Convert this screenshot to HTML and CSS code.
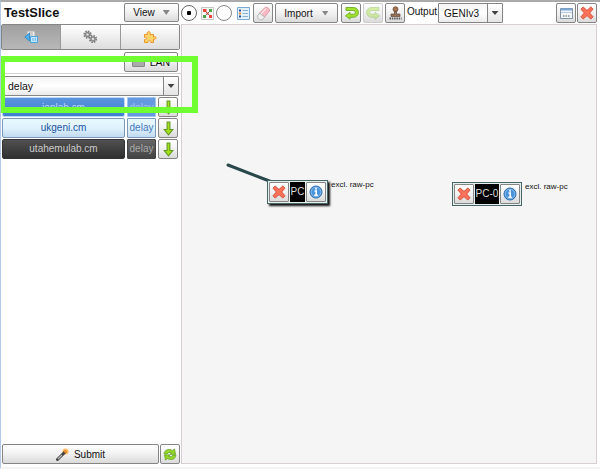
FILE: index.html
```
<!DOCTYPE html>
<html lang="en">
<head>
<meta charset="utf-8">
<title>TestSlice</title>
<link rel="stylesheet" href="styles.css">
</head>
<body>
<svg class="defs" width="0" height="0">
  <defs>
    <symbol id="cross" viewBox="0 0 14 14"><path d="M3.2 1 7 4.5 10.8 1 13 3.2 9.6 7 13 10.8 10.8 13 7 9.6 3.2 13 1 10.8 4.4 7 1 3.2Z" fill="#fa7257" stroke="#d94b38" stroke-linejoin="round"/></symbol>
    <symbol id="info" viewBox="0 0 14 14"><circle cx="7" cy="7" r="6" fill="#4b94da" stroke="#2466ae"/><circle cx="7" cy="7" r="4.9" fill="none" stroke="#9ccaf2" stroke-width=".7"/><path d="M7 2.8v2M5.5 6H7.2V10M5.3 10.3H8.8" stroke="#fff" stroke-width="1.6" fill="none"/></symbol>
    <symbol id="down" viewBox="0 0 10 14"><path d="M3.7 1h2.6v7H9L5 13 1 8h2.7Z" fill="#a5df18" stroke="#5f9a22"/></symbol>
    <symbol id="turn" viewBox="0 0 15 14"><path d="M2 1.500H9.500a4.900 4.900 0 0 1 0 9.800H6V13.300L1.500 9.800 6 6.300V8.300H9.500a1.900 1.900 0 0 0 0-3.800H2Z" fill="#a2e22b" stroke="#68ab22" stroke-width=".9" stroke-linejoin="round"/></symbol>
    <symbol id="gear" viewBox="0 0 10 10"><circle cx="5" cy="5" r="3.7" fill="none" stroke="#777" stroke-width="1.8" stroke-dasharray="1.7 1.2"/><circle cx="5" cy="5" r="2.3" fill="#ddd" stroke="#858585" stroke-width="1.7"/></symbol>
  </defs>
</svg>
<div class="app">
  <aside class="side">
    <header class="head"><h1>TestSlice</h1><button class="btn view">View<i class="tri"></i></button></header>
    <nav class="tabs">
      <span class="tab on"><svg width="15" height="14" viewBox="0 0 15 14"><path d="M3 1h8v9H3z" fill="#eee" stroke="#aaa"/><path d="M5 3h4M5 5h4" stroke="#aaa"/><path d="M5.500 3v8L.8 7Z" fill="#55afe8" stroke="#398fca"/><path d="M6.500 6.500h7v6h-7z" fill="#c5e7fc" stroke="#4aa4e0"/><path d="M9 8v3M11.300 8v3" stroke="#65b4e8"/></svg></span>
      <span class="tab"><svg width="15" height="14"><use href="#gear" width="9" height="9"/><use href="#gear" x="5.5" y="4.5" width="9" height="9"/></svg></span>
      <span class="tab"><svg width="14" height="14" viewBox="0 0 14 14"><path d="M1.500 4.500H4.500C3 .5 8.500 .5 7 4.500H10.500V7C14 5.500 14 10 10.500 9V12.500H7.800C8.300 9.800 4.500 9.800 5 12.500H1.500V9.500C4.500 10 4.500 6.800 1.500 7.500Z" fill="#ffd46b" stroke="#ec9629"/></svg></span>
    </nav>
    <div class="lanbar"><button class="btn lan"><i class="lanicon"></i>LAN</button></div>
    <div class="combo delay"><span>delay</span><b><i class="caret"></i></b></div>
    <div class="row blue"><span class="name">ionlab.cm</span><span class="kind">delay</span><button class="btn"><svg width="11" height="15"><use href="#down"/></svg></button></div>
    <div class="row pale"><span class="name">ukgeni.cm</span><span class="kind">delay</span><button class="btn"><svg width="11" height="15"><use href="#down"/></svg></button></div>
    <div class="row dark"><span class="name">utahemulab.cm</span><span class="kind">delay</span><button class="btn"><svg width="11" height="15"><use href="#down"/></svg></button></div>
    <footer class="foot">
      <button class="btn submit"><svg width="13" height="13" viewBox="0 0 13 13"><circle cx="9.500" cy="3.500" r="3" fill="#ffbd5d"/><path d="M1.500 11.500 9 4" stroke="#444" stroke-width="3" stroke-linecap="round"/><path d="M2 11 6 7" stroke="#bbb" stroke-width="1.300"/><path d="M8.500 4.500 10 3" stroke="#f58a28" stroke-width="2.500"/></svg>Submit</button>
      <button class="btn refresh"><svg width="14" height="13" viewBox="0 0 14 13"><path d="M1 6C1.500 1.500 6 .5 9.500 2.500L11.500 1 12.500 6.300H7L8.500 4.700C6.500 4 5 4.500 4 6ZM13 7C12.500 11.500 8 12.500 4.500 10.500L2.500 12 1.500 6.900H7L5.500 8.400C8 9 9 8.500 10 7Z" fill="#98d82c" stroke="#5f9f20" stroke-width=".8"/></svg></button>
    </footer>
  </aside>
  <main class="main">
    <div class="bar">
      <i class="radio on"></i>
      <svg class="links" width="13" height="13" viewBox="0 0 13 13"><path d="M.5.5h12v12H.5z" fill="#f6f6f6" stroke="#c4c4c4"/><path d="M3.500 9.500 9.500 3.500M3.500 3.500 9.500 9.500" stroke="#777"/><path d="M2 2h3.500v3H2zM8 8h3v3H8zM5.500 5.500h2v2h-2z" fill="#e8443c"/><path d="M8 2h3v3H8zM2 8h3v3H2z" fill="#4ea548"/></svg>
      <i class="radio second"></i>
      <svg class="list" width="13" height="13" viewBox="0 0 13 13"><path d="M.5.5h12v12H.5z" fill="#e3f1fc" stroke="#77a9d4"/><path d="M2 3.500h2M2 9.500h2" stroke="#284f9b" stroke-width="2"/><path d="M2 6.500h2" stroke="#e28735" stroke-width="2"/><path d="M5.500 3.500H11M5.500 6.500H11M5.500 9.500H11" stroke="#8ab1d1"/></svg>
      <button class="btn sq erase"><svg width="15" height="15" viewBox="0 0 15 15"><path d="M9 1.500c2-1 5 1 4.500 3.500l-4.800 6-5-4Z" fill="#fbb8c4" stroke="#dca0aa"/><path d="m3.700 7 5 4-2 2.500c-3 1-6-1-4.900-4Z" fill="#eee" stroke="#b5b5b5"/><path d="m5 8 5-5.500" stroke="#fff"/></svg></button>
      <button class="btn import">Import<i class="tri"></i></button>
      <button class="btn sq undo"><svg width="15" height="14"><use href="#turn"/></svg></button>
      <button class="btn sq redo"><svg width="15" height="14"><use href="#turn"/></svg></button>
      <button class="btn sq stamp"><svg width="15" height="15" viewBox="0 0 15 15"><circle cx="7.500" cy="3.200" r="2.500" fill="#a47452" stroke="#70503a" stroke-width=".8"/><path d="M6.500 5.500h2V8H12v2.500H3V8h3.500Z" fill="#967158" stroke="#60493b" stroke-width=".7"/><path d="M1.500 12.500h12" stroke="#555" stroke-width="2" stroke-dasharray="1.500 .8"/></svg></button>
      <span class="label">Output</span>
      <div class="combo format"><span>GENIv3</span><b><i class="caret"></i></b></div>
      <button class="btn sq win"><svg width="13" height="13" viewBox="0 0 13 13"><path d="M.5 1.500h12v10H.5z" fill="#f3f6f9" stroke="#8293a4"/><path d="M1 2.500h11" stroke="#79a8dd" stroke-width="2"/><path d="M1 5.500h11" stroke="#bccbdc"/><path d="M3 9h7" stroke="#555" stroke-dasharray="1.500 1"/></svg></button>
      <button class="btn sq close"><svg width="14" height="14"><use href="#cross"/></svg></button>
    </div>
    <div class="canvas">
      <svg class="wire" width="50" height="24"><path d="M3 2 47 19" stroke="#29484b" stroke-width="3" stroke-linecap="round"/></svg>
      <div class="node first"><button class="btn"><svg width="14" height="14"><use href="#cross"/></svg></button><span>PC</span><button class="btn"><svg width="14" height="14"><use href="#info"/></svg></button></div>
      <div class="note n1">excl. raw-pc</div>
      <div class="node other"><button class="btn"><svg width="14" height="14"><use href="#cross"/></svg></button><span>PC-0</span><button class="btn"><svg width="14" height="14"><use href="#info"/></svg></button></div>
      <div class="note n2">excl. raw-pc</div>
    </div>
  </main>
  <div class="highlight"></div>
</div>
</body>
</html>
```
FILE: styles.css
```
* { box-sizing: border-box; }
body { margin: 0; font: 10px "Liberation Sans", Arial, sans-serif; color: #111; }
h1 { margin: 0; font-size: 12.8px; line-height: 22px; }
svg { display: block; flex: none; }
i { flex: none; }
.defs { position: absolute; }
.app { position: relative; display: flex; width: 600px; height: 469px; overflow: hidden; background: #fff; border-top: 2px solid #aaa; border-left: 1px solid #b3c8e4; border-bottom: 2px solid #f4f2f3; }
.side { width: 180px; display: flex; flex-direction: column; }
.head { display: flex; justify-content: space-between; height: 22px; padding: 0 2px 0 3px; }
.btn { display: flex; align-items: center; justify-content: center; padding: 0; border: 1px solid #858585; border-radius: 2px; background: linear-gradient(#fff, #f1f1f1 50%, #dadada); font: 10px "Liberation Sans", Arial, sans-serif; color: #111; }
.view { width: 55px; height: 19px; margin-top: 1px; gap: 8px; }
.tri { width: 7px; height: 5px; background: #858585; clip-path: polygon(0 0, 100% 0, 50% 100%); }
.tabs { display: flex; width: 179px; height: 26px; border: 1px solid #858585; border-radius: 2px; }
.tab { flex: 1; display: flex; align-items: center; justify-content: center; background: linear-gradient(#fff, #eee 50%, #ddd); border-left: 1px solid #999; }
.tab.on { background: linear-gradient(#a0a0a0, #b8b8b8); border-left: 0; }
.lanbar { display: flex; justify-content: flex-end; height: 24px; padding: 2px 3px 0 0; border-bottom: 1px solid #d5d0d3; }
.lan { width: 54px; height: 20px; gap: 5px; font-size: 10.5px; }
.lanicon { width: 13px; height: 9px; background: #aaa; border: 1px solid #888; border-radius: 1px; }
.combo { display: flex; height: 20px; border: 1px solid #858585; border-radius: 1px; background: linear-gradient(#f5f5f5, #fff 50%, #eaeaea); line-height: 19px; }
.combo span { flex: 1; padding-left: 5px; }
.combo b { display: flex; width: 15px; align-items: center; justify-content: center; border-left: 1px solid #858585; background: linear-gradient(#fff, #e4e4e4); }
.caret { width: 7px; height: 4px; background: #444; clip-path: polygon(0 0, 100% 0, 50% 100%); }
.delay { margin: 2px 2px 1px 1px; font-size: 10.5px; }
.row { display: flex; gap: 2px; height: 20px; margin: 0 1px 1px; line-height: 18px; text-align: center; }
.row .name { width: 123px; border: 1px solid; border-radius: 2px; }
.row .kind { width: 29px; border: 1px solid; border-radius: 1px; }
.row .btn { width: 20px; }
.blue span { background: linear-gradient(#5a94dd, #3e7fd0); border-color: #3c6ba9; color: #bcd7f5; }
.blue .kind { background: #669ae0; color: #a1c4ef; }
.blue { line-height: 19px; }
.pale .name, .pale .kind { background: linear-gradient(#e7f8ff, #e0f2fd 50%, #c1daf0); border-color: #7b98b8; color: #1b54a2; }
.pale .kind { color: #4675bd; }
.dark .name { background: linear-gradient(#505050, #303030); border-color: #333; color: #ccc; }
.dark .kind { background: linear-gradient(#666, #444); border-color: #444; color: #aaa; }
.foot { display: flex; gap: 1px; height: 20px; margin: auto 0 3px 1px; }
.submit { width: 157px; gap: 5px; }
.refresh { width: 20px; }
.main { flex: 1; display: flex; flex-direction: column; }
.bar { display: flex; height: 22px; align-items: center; padding-right: 3px; }
.radio { width: 16px; height: 16px; border: 1px solid #666; border-radius: 50%; background: radial-gradient(#fff, #fff 55%, #f1f1f1); }
.radio.on { background: radial-gradient(circle, #000 0 2px, #fff 2.5px); }
.links { margin-left: 4px; }
.second { margin-left: 2px; border-color: #888; }
.list { margin-left: 5px; }
.sq { width: 20px; height: 20px; flex: none; }
.erase { margin-left: 3px; }
.import { width: 63px; height: 20px; margin-left: 2px; gap: 9px; }
.undo { margin-left: 3px; }
.redo { margin-left: 2px; border-color: #ccc; }
.redo svg { transform: scaleX(-1); opacity: .4; }
.stamp { margin-left: 2px; }
.label { width: 31px; margin-left: 2px; line-height: 20px; height: 22px; white-space: nowrap; }
.format { width: 65px; }
.win { margin-left: auto; }
.close { margin-left: 1px; }
.canvas { position: relative; flex: 1; margin: 0 3px 3px 0; background: #f5f5f5; border: 1px solid #d8cdd2; }
.wire { position: absolute; left: 43px; top: 138px; }
.node { position: absolute; display: flex; align-items: center; height: 24px; padding: 1px; border: 1px solid #466667; background: #e7eeee; }
.node .btn { width: 20px; height: 20px; flex: none; border-radius: 1px; }
.node span { flex: 1; height: 20px; line-height: 20px; background: #000; color: #ddd; text-align: center; white-space: nowrap; margin: 0 1px; }
.first { left: 85px; top: 155px; width: 61px; box-shadow: 2px 2px 2px #111; }
.other { left: 270px; top: 157px; width: 70px; }
.note { position: absolute; font-size: 8px; line-height: 10px; white-space: nowrap; }
.n1 { left: 149px; top: 155px; }
.n2 { left: 343px; top: 157px; }
.highlight { position: absolute; left: -1px; top: 54px; width: 198px; height: 57px; border: 6px solid #70ff31; border-left-width: 5px; }
```
